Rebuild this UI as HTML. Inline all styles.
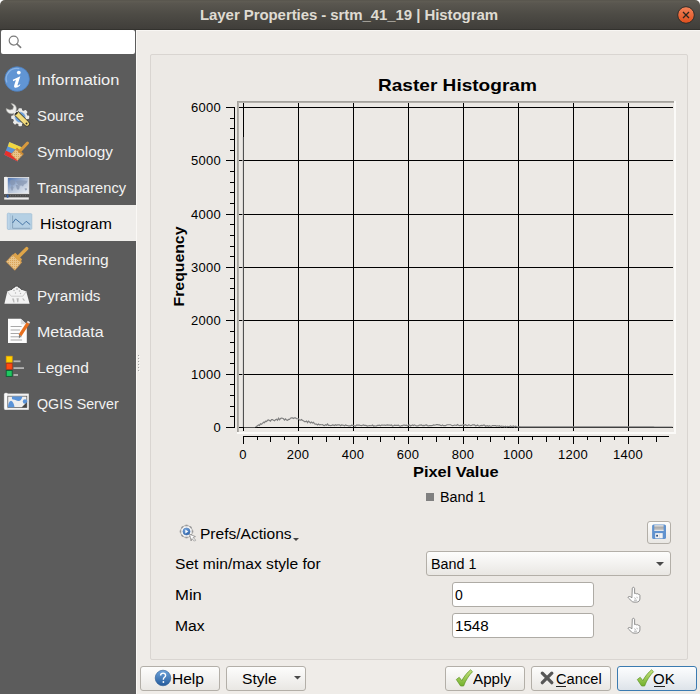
<!DOCTYPE html>
<html><head><meta charset="utf-8">
<style>
*{box-sizing:border-box}
html,body{margin:0;padding:0}
body{width:700px;height:694px;position:relative;overflow:hidden;background:#ffffff;font-family:"Liberation Sans",sans-serif;color:#000}
.a{position:absolute}
.t{position:absolute;line-height:1;white-space:nowrap;font-family:"Liberation Sans",sans-serif;transform-origin:0 50%}
#titlebar{left:0;top:0;width:700px;height:30px;background:linear-gradient(#55524b 0px,#5f5c53 1px,#5e5b53 2px,#5a5750 3px,#4d4b45 50%,#403e3a 100%);border-radius:5px 5px 0 0;border-bottom:1px solid #33322e}
#side{left:0;top:30px;width:136px;height:664px;background:#5c5c5c}
.si{color:#f2f2f2;font-size:14px}
#sel{left:0;top:205px;width:136px;height:36px;background:#efedea}
#search{left:1px;top:30px;width:134px;height:24px;background:#fff;border-radius:2px}
#panel{left:136px;top:30px;width:564px;height:664px;background:#efece8;border-left:1px solid #faf8f5;border-top:1px solid #f8f6f3}
#group{left:150px;top:54px;width:538px;height:606px;border:1px solid #d9d5d1;border-radius:2px;background:#ece9e5}
.yl{font-size:13px;text-align:right;width:60px;left:161px;letter-spacing:0.3px}
.xl{font-size:13px;text-align:center;width:60px;letter-spacing:0.3px}
.lbl{font-size:14px}
.btn{position:absolute;top:666px;height:25px;border:1px solid #b3afa8;border-radius:3px;background:linear-gradient(#fdfdfc,#f3f2f0 50%,#e9e7e3)}
.inp{position:absolute;left:452px;width:142px;height:25px;border:1px solid #aeaba5;border-radius:3px;background:#fff}
</style></head><body>

<div id="titlebar" class="a"></div>
<div class="t" style="left:200px;top:7px;font-size:15px;font-weight:700;color:#dfdbd2;letter-spacing:-0.075px">Layer Properties - srtm_41_19 | Histogram</div>
<svg class="a" style="left:676px;top:5px" width="20" height="20" viewBox="0 0 20 20">
  <defs><linearGradient id="cg" x1="0" y1="0" x2="0" y2="1"><stop offset="0" stop-color="#f3845b"/><stop offset="1" stop-color="#df4e1c"/></linearGradient></defs>
  <circle cx="10" cy="10" r="8.3" fill="url(#cg)" stroke="#2f2d29" stroke-width="1"/>
  <path d="M7 7L13 13M13 7L7 13" stroke="#2a2620" stroke-width="1.3"/>
</svg>

<div id="side" class="a"></div>
<div id="search" class="a"></div>
<svg class="a" style="left:7px;top:34px" width="18" height="18" viewBox="0 0 18 18">
  <circle cx="6.7" cy="6.6" r="4.5" fill="none" stroke="#7a7a7a" stroke-width="1.2"/>
  <path d="M10 10L13.6 13.4" stroke="#7a7a7a" stroke-width="1.6" stroke-linecap="round"/>
</svg>
<div id="sel" class="a"></div>

<!-- sidebar items -->
<div class="t si" style="left:37px;top:73px;transform:scaleX(1.176)">Information</div>
<div class="t si" style="left:37px;top:109px;transform:scaleX(1.058)">Source</div>
<div class="t si" style="left:37px;top:145px;transform:scaleX(1.096)">Symbology</div>
<div class="t si" style="left:37px;top:181px;transform:scaleX(1.047)">Transparency</div>
<div class="t si" style="left:40px;top:217px;transform:scaleX(1.129);color:#000">Histogram</div>
<div class="t si" style="left:37px;top:253px;transform:scaleX(1.111)">Rendering</div>
<div class="t si" style="left:37px;top:289px;transform:scaleX(1.088)">Pyramids</div>
<div class="t si" style="left:37px;top:325px;transform:scaleX(1.14)">Metadata</div>
<div class="t si" style="left:37px;top:361px;transform:scaleX(1.111)">Legend</div>
<div class="t si" style="left:37px;top:397px;transform:scaleX(1.019)">QGIS Server</div>

<svg class="a" style="left:0;top:60px" width="36" height="360" viewBox="0 60 36 360">
<defs>
 <linearGradient id="ib" x1="0" y1="0" x2="0.3" y2="1"><stop offset="0" stop-color="#7aaae0"/><stop offset="1" stop-color="#3f73b6"/></linearGradient>
 <linearGradient id="tm" x1="0" y1="0" x2="1" y2="1"><stop offset="0" stop-color="#3d67ab"/><stop offset="0.55" stop-color="#b6c4d9"/><stop offset="1" stop-color="#eef1f5"/></linearGradient>
 <pattern id="grid" width="2" height="2" patternUnits="userSpaceOnUse"><rect width="2" height="2" fill="#e9c489"/><rect width="1" height="1" fill="#d9a55a"/></pattern>
</defs>
<!-- Information -->
<circle cx="17.1" cy="79" r="12.3" fill="#6195d4" stroke="#4c7fc0" stroke-width="0.7"/>
<path d="M6.8 82.5a10.6 10.6 0 0 1 12.5-13.8" stroke="#8ab3e4" stroke-width="1.3" fill="none"/>
<circle cx="18.8" cy="72.6" r="1.9" fill="#fff"/>
<path d="M12.8 79.7L20.3 76.3 17.6 84.8c-0.3 0.9 0.3 1 1 0.4l1.8-1.3-0.6 1.8c-1.8 1.8-4.2 2.4-5.2 1.7-0.7-0.5-0.6-1.4-0.3-2.4L15.9 80 13.1 81.2z" fill="#fff"/>
<!-- Source: wrench + gear -->
<g>
 <g transform="translate(20.2 117.2)">
  <g fill="#ebebe9">
   <circle r="7.3"/>
   <rect x="-1.8" y="-9" width="3.6" height="18" rx="1"/>
   <rect x="-1.8" y="-9" width="3.6" height="18" rx="1" transform="rotate(45)"/>
   <rect x="-1.8" y="-9" width="3.6" height="18" rx="1" transform="rotate(90)"/>
   <rect x="-1.8" y="-9" width="3.6" height="18" rx="1" transform="rotate(135)"/>
  </g>
  <circle r="5.4" fill="#6b9fd9" stroke="#d8d8d6" stroke-width="0.5"/>
 </g>
 <path d="M6.2 108.6a5.2 5.2 0 0 0 7.6 4.6l1.8 1.8 2-2-1.8-1.8a5.2 5.2 0 0 0-4.6-7.6l2.4 2.8-0.8 2.8-2.8 0.8z" fill="#eeeeec" stroke="#a4a4a0" stroke-width="0.6"/>
 <path d="M14.6 115.2l3.6-3.6 10.6 10.4a2.5 2.5 0 0 1-3.6 3.6z" fill="#f2dc7c" stroke="#2e2d26" stroke-width="0.9" stroke-linejoin="round"/>
 <path d="M15.4 114.4l2-2" stroke="#2e2d26" stroke-width="1.6"/>
 <circle cx="26.5" cy="123.6" r="1" fill="#2e2d26"/>
</g>
<!-- Symbology -->
<g>
 <path d="M9.3 142L21.8 147.2 17.6 161.5 4.2 154.7z" fill="#5b94d6"/>
 <path d="M9.3 142L21.8 147.2 20.5 151.2 7.8 146.5z" fill="#f0d640"/>
 <path d="M5.8 150.5L18.7 156.8 17.6 161.5 4.2 154.7z" fill="#e8302a"/>
 <path d="M11 154.5l5.8-6.3 6.4 6-5.8 6.3z" fill="url(#grid)" stroke="#c8883a" stroke-width="0.6"/>
 <path d="M19.5 151.5l8-8.5" stroke="#d99a3e" stroke-width="3" stroke-linecap="round"/>
 <path d="M16.5 148.6l6.5 6" stroke="#c98a35" stroke-width="2"/>
</g>
<!-- Transparency -->
<g>
 <rect x="4.5" y="177.5" width="24.3" height="16.2" fill="url(#tm)" stroke="#ececec" stroke-width="0.8"/>
 <rect x="4.2" y="176.8" width="3.6" height="17" rx="1.5" fill="#f2f2f2"/>
 <g fill="#8797b2" opacity="0.75">
  <path d="M10 180.5c2-0.8 4-0.6 5.5 0.2l-0.5 3.2-2.2 1.6-1.2 0.2-1.5-2.5z"/>
  <path d="M11.5 186c1 0 2 0.6 2 1.5l-1 3.2-1-0.2-0.8-3z"/>
  <path d="M15.5 180.8c3-0.8 8-0.8 12 0l-1 2.5-2.5 1.2-1 2-1.5-1-2.5 0.3-1.5-1.5z"/>
  <path d="M15.8 185c1.5-0.3 3 0 4 0.6l-0.6 3.4-1.3 1-1.2-1.5z"/>
  <path d="M24.5 188.5l2-0.5 0.6 1.8-1.8 0.6z"/>
 </g>
 <rect x="4" y="194.6" width="25" height="2.2" fill="#4a4a4a"/>
 <path d="M5 195.7h23" stroke="#7a7a7a" stroke-width="0.8" stroke-dasharray="1 1.5"/>
 <rect x="4.2" y="197.4" width="24.6" height="2.2" fill="#ececec"/>
 <rect x="6.7" y="194.5" width="1.8" height="3.3" rx="0.5" fill="#2f5da6"/>
</g>
<!-- Rendering -->
<g>
 <path d="M6.2 261.7L12.7 254.7 21.8 262.2 14.8 270.3z" fill="url(#grid)" stroke="#d09445" stroke-width="0.7"/>
 <path d="M12.3 255.3l3-2.5 6.7 6.5-1.5 3z" fill="#dca24c"/>
 <path d="M17.5 257.8l9.2-9.2" stroke="#dfa548" stroke-width="3.4" stroke-linecap="round"/>
</g>
<!-- Pyramids -->
<g>
 <path d="M4.4 303.8L7.3 291.5 11.5 289.8 16.6 286 21.7 289.8 26.3 291.5 29.6 303.8z" fill="#f3f3f3"/>
 <path d="M11 290c1.8-2 3.8-3.6 5.6-3.9 1.8 0.3 3.8 1.9 5.6 3.9" stroke="#3e3e3e" stroke-width="0.9" stroke-dasharray="1.2 0.9" fill="none"/>
 <path d="M7.3 291.5L11.2 296.2M26.3 291.5L22.8 296.2M11.2 296.2h11.6" stroke="#c2c2c2" stroke-width="0.8" fill="none"/>
 <g fill="#b8b8b8">
  <circle cx="14" cy="290.5" r="0.8"/><circle cx="17" cy="289" r="0.9"/><circle cx="19.5" cy="291" r="0.8"/><circle cx="15.5" cy="293" r="0.7"/><circle cx="20.5" cy="293.5" r="0.7"/>
  <path d="M12 298.5l1.5 4h1l-0.5-4z"/><path d="M16.5 298.3l0.8 4h1l0.5-4z"/><path d="M22 298.5l2 2.5 0.8-0.5-1-2z"/>
 </g>
</g>
<!-- Metadata -->
<g>
 <path d="M8 318.7h12.8l6 5.6V343H8z" fill="#fdfdfd"/>
 <path d="M20.8 318.7v5.6h6z" fill="#dcdcdc"/>
 <path d="M10.6 326.5h11M10.6 330h9.5M10.6 333.5h8.5M10.6 336.8h11M10.6 340h11.5" stroke="#a8a8a8" stroke-width="1"/>
 <path d="M26.7 322.3l2.8 1.7-8.1 12.3-2.8-1.7z" fill="#e8701f"/>
 <path d="M19 334.6l2.3 1.5-2.4 2.4z" fill="#777"/>
 <path d="M26.8 322.3l1 -1.6 2.4 1.5-1 1.6z" fill="#efe3dc"/>
</g>
<!-- Legend -->
<g>
 <rect x="6.2" y="356.2" width="6" height="6" fill="#ffd200" stroke="#e8a200" stroke-width="0.7"/>
 <rect x="6.2" y="363.3" width="6" height="6" fill="#ff4a10" stroke="#b83010" stroke-width="0.7"/>
 <rect x="6.2" y="370.4" width="6" height="6" fill="#1ec860" stroke="#0e5a30" stroke-width="0.9"/>
 <rect x="13.5" y="360.4" width="7" height="1.8" fill="#b4b4b4"/>
 <rect x="13.5" y="367.2" width="10.5" height="1.8" fill="#b4b4b4"/>
 <rect x="13.5" y="374.1" width="4.5" height="1.8" fill="#b4b4b4"/>
</g>
<!-- QGIS Server -->
<g>
 <rect x="4.6" y="393.6" width="24.2" height="16.2" fill="#f3f3f3"/>
 <rect x="4.2" y="393" width="3.6" height="16.6" rx="1.5" fill="#fafafa" stroke="#cfcfcf" stroke-width="0.4"/>
 <rect x="7.8" y="396.2" width="19" height="11.3" fill="#efefef" stroke="#555" stroke-width="0.7"/>
 <path d="M12 396.5h10.5c-1 3-2 4.5-4 4.5s-3-1.5-5.5-1.5c-1.2 0-1.2-1.5-1-3z" fill="#5a93d8"/>
 <path d="M8 407.3c0-3 1-6 3-6.5 2 0.5 3 3 3.5 6.5z" fill="#5a93d8"/>
 <circle cx="25" cy="401.5" r="2.2" fill="#5a93d8"/>
 <path d="M21.5 407.5l5.3-5.3v5.3z" fill="#444"/>
</g>
</svg>
<!-- Histogram icon (selected row) -->
<svg class="a" style="left:6px;top:212px" width="28" height="20" viewBox="6 212 28 20">
 <rect x="7.5" y="213.7" width="24.3" height="15.6" rx="0.8" fill="#b5d0e4" stroke="#a3c0d6" stroke-width="0.8"/>
 <rect x="7.2" y="213" width="3" height="16.5" rx="1.4" fill="#bcd5e8" stroke="#a3c0d6" stroke-width="0.6"/>
 <path d="M12.6 215.5v12.8h17.5" stroke="#8aa6bd" stroke-width="1" fill="none"/>
 <path d="M12.6 223l3-4 4 3.3 3 2.6 3.6-3.6 4 3.3" stroke="#2c5f95" stroke-width="0.8" fill="none"/>
</svg>


<div id="panel" class="a"></div>
<svg class="a" style="left:137px;top:354px" width="4" height="20" shape-rendering="crispEdges"><rect x="1" y="1" width="1" height="1" fill="#a3a3a3"/><rect x="2" y="2" width="1" height="1" fill="#fbfaf8"/><rect x="1" y="4" width="1" height="1" fill="#a3a3a3"/><rect x="2" y="5" width="1" height="1" fill="#fbfaf8"/><rect x="1" y="7" width="1" height="1" fill="#a3a3a3"/><rect x="2" y="8" width="1" height="1" fill="#fbfaf8"/><rect x="1" y="10" width="1" height="1" fill="#a3a3a3"/><rect x="2" y="11" width="1" height="1" fill="#fbfaf8"/><rect x="1" y="13" width="1" height="1" fill="#a3a3a3"/><rect x="2" y="14" width="1" height="1" fill="#fbfaf8"/><rect x="1" y="16" width="1" height="1" fill="#a3a3a3"/><rect x="2" y="17" width="1" height="1" fill="#fbfaf8"/></svg>
<div id="group" class="a"></div>

<svg class="a" style="left:0;top:0" width="700" height="694" viewBox="0 0 700 694" shape-rendering="crispEdges">
<rect x="237" y="101" width="439" height="333" fill="#fbfaf8"/>
<rect x="237" y="101" width="437" height="331" fill="#a4a29d"/>
<rect x="238" y="102" width="436" height="330" fill="#b3b0ab"/>
<rect x="239" y="103" width="435" height="329" fill="#ece9e5"/>
<line x1="239" y1="107.5" x2="673" y2="107.5" stroke="#000" stroke-width="1"/>
<line x1="239" y1="160.5" x2="673" y2="160.5" stroke="#000" stroke-width="1"/>
<line x1="239" y1="214.5" x2="673" y2="214.5" stroke="#000" stroke-width="1"/>
<line x1="239" y1="267.5" x2="673" y2="267.5" stroke="#000" stroke-width="1"/>
<line x1="239" y1="320.5" x2="673" y2="320.5" stroke="#000" stroke-width="1"/>
<line x1="239" y1="374.5" x2="673" y2="374.5" stroke="#000" stroke-width="1"/>
<line x1="239" y1="427.5" x2="673" y2="427.5" stroke="#000" stroke-width="1"/>
<line x1="243.5" y1="103" x2="243.5" y2="431" stroke="#000" stroke-width="1"/>
<line x1="298.5" y1="103" x2="298.5" y2="431" stroke="#000" stroke-width="1"/>
<line x1="353.5" y1="103" x2="353.5" y2="431" stroke="#000" stroke-width="1"/>
<line x1="408.5" y1="103" x2="408.5" y2="431" stroke="#000" stroke-width="1"/>
<line x1="463.5" y1="103" x2="463.5" y2="431" stroke="#000" stroke-width="1"/>
<line x1="518.5" y1="103" x2="518.5" y2="431" stroke="#000" stroke-width="1"/>
<line x1="573.5" y1="103" x2="573.5" y2="431" stroke="#000" stroke-width="1"/>
<line x1="628.5" y1="103" x2="628.5" y2="431" stroke="#000" stroke-width="1"/>
<line x1="234.5" y1="107" x2="234.5" y2="428" stroke="#000" stroke-width="1"/>
<line x1="226" y1="107.5" x2="235" y2="107.5" stroke="#000" stroke-width="1"/>
<line x1="230" y1="118.5" x2="235" y2="118.5" stroke="#000" stroke-width="1"/>
<line x1="230" y1="128.5" x2="235" y2="128.5" stroke="#000" stroke-width="1"/>
<line x1="230" y1="139.5" x2="235" y2="139.5" stroke="#000" stroke-width="1"/>
<line x1="230" y1="150.5" x2="235" y2="150.5" stroke="#000" stroke-width="1"/>
<line x1="226" y1="160.5" x2="235" y2="160.5" stroke="#000" stroke-width="1"/>
<line x1="230" y1="171.5" x2="235" y2="171.5" stroke="#000" stroke-width="1"/>
<line x1="230" y1="182.5" x2="235" y2="182.5" stroke="#000" stroke-width="1"/>
<line x1="230" y1="192.5" x2="235" y2="192.5" stroke="#000" stroke-width="1"/>
<line x1="230" y1="203.5" x2="235" y2="203.5" stroke="#000" stroke-width="1"/>
<line x1="226" y1="214.5" x2="235" y2="214.5" stroke="#000" stroke-width="1"/>
<line x1="230" y1="224.5" x2="235" y2="224.5" stroke="#000" stroke-width="1"/>
<line x1="230" y1="235.5" x2="235" y2="235.5" stroke="#000" stroke-width="1"/>
<line x1="230" y1="246.5" x2="235" y2="246.5" stroke="#000" stroke-width="1"/>
<line x1="230" y1="256.5" x2="235" y2="256.5" stroke="#000" stroke-width="1"/>
<line x1="226" y1="267.5" x2="235" y2="267.5" stroke="#000" stroke-width="1"/>
<line x1="230" y1="278.5" x2="235" y2="278.5" stroke="#000" stroke-width="1"/>
<line x1="230" y1="288.5" x2="235" y2="288.5" stroke="#000" stroke-width="1"/>
<line x1="230" y1="299.5" x2="235" y2="299.5" stroke="#000" stroke-width="1"/>
<line x1="230" y1="310.5" x2="235" y2="310.5" stroke="#000" stroke-width="1"/>
<line x1="226" y1="320.5" x2="235" y2="320.5" stroke="#000" stroke-width="1"/>
<line x1="230" y1="331.5" x2="235" y2="331.5" stroke="#000" stroke-width="1"/>
<line x1="230" y1="342.5" x2="235" y2="342.5" stroke="#000" stroke-width="1"/>
<line x1="230" y1="352.5" x2="235" y2="352.5" stroke="#000" stroke-width="1"/>
<line x1="230" y1="363.5" x2="235" y2="363.5" stroke="#000" stroke-width="1"/>
<line x1="226" y1="374.5" x2="235" y2="374.5" stroke="#000" stroke-width="1"/>
<line x1="230" y1="384.5" x2="235" y2="384.5" stroke="#000" stroke-width="1"/>
<line x1="230" y1="395.5" x2="235" y2="395.5" stroke="#000" stroke-width="1"/>
<line x1="230" y1="406.5" x2="235" y2="406.5" stroke="#000" stroke-width="1"/>
<line x1="230" y1="416.5" x2="235" y2="416.5" stroke="#000" stroke-width="1"/>
<line x1="226" y1="427.5" x2="235" y2="427.5" stroke="#000" stroke-width="1"/>
<line x1="243" y1="436.5" x2="669" y2="436.5" stroke="#000" stroke-width="1"/>
<line x1="243.5" y1="436" x2="243.5" y2="444" stroke="#000" stroke-width="1"/>
<line x1="257.5" y1="436" x2="257.5" y2="440" stroke="#000" stroke-width="1"/>
<line x1="270.5" y1="436" x2="270.5" y2="442" stroke="#000" stroke-width="1"/>
<line x1="284.5" y1="436" x2="284.5" y2="440" stroke="#000" stroke-width="1"/>
<line x1="298.5" y1="436" x2="298.5" y2="444" stroke="#000" stroke-width="1"/>
<line x1="312.5" y1="436" x2="312.5" y2="440" stroke="#000" stroke-width="1"/>
<line x1="326.5" y1="436" x2="326.5" y2="442" stroke="#000" stroke-width="1"/>
<line x1="339.5" y1="436" x2="339.5" y2="440" stroke="#000" stroke-width="1"/>
<line x1="353.5" y1="436" x2="353.5" y2="444" stroke="#000" stroke-width="1"/>
<line x1="367.5" y1="436" x2="367.5" y2="440" stroke="#000" stroke-width="1"/>
<line x1="380.5" y1="436" x2="380.5" y2="442" stroke="#000" stroke-width="1"/>
<line x1="394.5" y1="436" x2="394.5" y2="440" stroke="#000" stroke-width="1"/>
<line x1="408.5" y1="436" x2="408.5" y2="444" stroke="#000" stroke-width="1"/>
<line x1="422.5" y1="436" x2="422.5" y2="440" stroke="#000" stroke-width="1"/>
<line x1="436.5" y1="436" x2="436.5" y2="442" stroke="#000" stroke-width="1"/>
<line x1="449.5" y1="436" x2="449.5" y2="440" stroke="#000" stroke-width="1"/>
<line x1="463.5" y1="436" x2="463.5" y2="444" stroke="#000" stroke-width="1"/>
<line x1="477.5" y1="436" x2="477.5" y2="440" stroke="#000" stroke-width="1"/>
<line x1="490.5" y1="436" x2="490.5" y2="442" stroke="#000" stroke-width="1"/>
<line x1="504.5" y1="436" x2="504.5" y2="440" stroke="#000" stroke-width="1"/>
<line x1="518.5" y1="436" x2="518.5" y2="444" stroke="#000" stroke-width="1"/>
<line x1="532.5" y1="436" x2="532.5" y2="440" stroke="#000" stroke-width="1"/>
<line x1="546.5" y1="436" x2="546.5" y2="442" stroke="#000" stroke-width="1"/>
<line x1="559.5" y1="436" x2="559.5" y2="440" stroke="#000" stroke-width="1"/>
<line x1="573.5" y1="436" x2="573.5" y2="444" stroke="#000" stroke-width="1"/>
<line x1="587.5" y1="436" x2="587.5" y2="440" stroke="#000" stroke-width="1"/>
<line x1="600.5" y1="436" x2="600.5" y2="442" stroke="#000" stroke-width="1"/>
<line x1="614.5" y1="436" x2="614.5" y2="440" stroke="#000" stroke-width="1"/>
<line x1="628.5" y1="436" x2="628.5" y2="444" stroke="#000" stroke-width="1"/>
<line x1="642.5" y1="436" x2="642.5" y2="440" stroke="#000" stroke-width="1"/>
<line x1="656.5" y1="436" x2="656.5" y2="442" stroke="#000" stroke-width="1"/>
<g shape-rendering="geometricPrecision">
<path d="M255.5,427.00 L256.5,426.52 L257.5,425.69 L258.5,424.86 L259.5,425.38 L260.5,423.74 L261.5,424.18 L262.5,423.36 L263.5,422.25 L264.5,422.66 L265.5,421.24 L266.5,421.54 L267.5,420.33 L268.5,419.88 L269.5,420.40 L270.5,421.05 L271.5,419.50 L272.5,419.55 L273.5,420.20 L274.5,420.70 L275.5,419.80 L276.5,419.29 L277.5,420.31 L278.5,418.31 L279.5,419.80 L280.5,418.52 L281.5,418.09 L282.5,418.24 L283.5,418.82 L284.5,420.03 L285.5,418.96 L286.5,419.96 L287.5,420.28 L288.5,419.44 L289.5,419.50 L290.5,418.23 L291.5,417.92 L292.5,417.91 L293.5,418.56 L294.5,417.76 L295.5,417.84 L296.5,418.69 L297.5,418.74 L298.5,418.74 L299.5,420.04 L300.5,420.16 L301.5,419.57 L302.5,420.54 L303.5,420.75 L304.5,421.70 L305.5,421.65 L306.5,421.02 L307.5,422.65 L308.5,421.17 L309.5,422.02 L310.5,422.94 L311.5,421.98 L312.5,422.90 L313.5,422.25 L314.5,423.75 L315.5,424.19 L316.5,424.05 L317.5,424.90 L318.5,424.03 L319.5,424.85 L320.5,424.70 L321.5,424.73 L322.5,424.54 L323.5,425.36 L324.5,425.63 L325.5,424.74 L326.5,425.18 L327.5,424.03 L328.5,425.37 L329.5,425.31 L330.5,425.67 L331.5,425.52 L332.5,424.93 L333.5,425.11 L334.5,425.50 L335.5,424.74 L336.5,425.28 L337.5,424.94 L338.5,424.89 L339.5,424.83 L340.5,425.70 L341.5,424.94 L342.5,425.10 L343.5,425.28 L344.5,425.87 L345.5,424.93 L346.5,425.39 L347.5,425.52 L348.5,425.94 L349.5,425.87 L350.5,425.94 L351.5,425.24 L352.5,425.40 L353.5,425.34 L354.5,425.97 L355.5,426.06 L356.5,425.09 L357.5,425.13 L358.5,425.19 L359.5,425.20 L360.5,425.50 L361.5,425.63 L362.5,425.24 L363.5,424.93 L364.5,425.43 L365.5,425.37 L366.5,425.61 L367.5,426.08 L368.5,425.76 L369.5,425.56 L370.5,425.68 L371.5,425.75 L372.5,425.01 L373.5,426.03 L374.5,425.88 L375.5,426.00 L376.5,425.91 L377.5,425.42 L378.5,425.43 L379.5,425.08 L380.5,425.72 L381.5,425.04 L382.5,425.04 L383.5,425.22 L384.5,425.16 L385.5,425.38 L386.5,425.04 L387.5,424.97 L388.5,425.16 L389.5,425.10 L390.5,425.42 L391.5,425.01 L392.5,426.03 L393.5,425.72 L394.5,425.17 L395.5,425.29 L396.5,425.41 L397.5,425.43 L398.5,425.14 L399.5,426.02 L400.5,426.19 L401.5,425.55 L402.5,425.55 L403.5,425.06 L404.5,425.07 L405.5,425.34 L406.5,425.24 L407.5,425.90 L408.5,425.09 L409.5,424.91 L410.5,426.01 L411.5,425.49 L412.5,425.02 L413.5,425.48 L414.5,424.85 L415.5,425.43 L416.5,425.96 L417.5,425.81 L418.5,425.60 L419.5,425.06 L420.5,425.17 L421.5,424.92 L422.5,425.63 L423.5,425.33 L424.5,425.61 L425.5,425.06 L426.5,424.92 L427.5,425.61 L428.5,425.81 L429.5,425.64 L430.5,425.57 L431.5,425.58 L432.5,425.48 L433.5,424.85 L434.5,425.20 L435.5,425.00 L436.5,424.60 L437.5,424.59 L438.5,424.89 L439.5,424.86 L440.5,425.37 L441.5,425.68 L442.5,425.07 L443.5,425.65 L444.5,425.71 L445.5,425.66 L446.5,424.95 L447.5,424.77 L448.5,424.77 L449.5,424.73 L450.5,424.73 L451.5,425.23 L452.5,425.55 L453.5,425.48 L454.5,425.04 L455.5,425.24 L456.5,425.41 L457.5,424.55 L458.5,425.23 L459.5,425.53 L460.5,425.37 L461.5,425.32 L462.5,424.99 L463.5,424.63 L464.5,425.35 L465.5,424.80 L466.5,425.39 L467.5,425.63 L468.5,424.97 L469.5,425.01 L470.5,425.70 L471.5,425.46 L472.5,424.83 L473.5,424.81 L474.5,424.87 L475.5,425.81 L476.5,425.72 L477.5,424.96 L478.5,425.81 L479.5,426.02 L480.5,425.67 L481.5,425.33 L482.5,425.60 L483.5,425.13 L484.5,425.03 L485.5,426.21 L486.5,425.85 L487.5,425.74 L488.5,426.26 L489.5,425.69 L490.5,426.25 L491.5,426.23 L492.5,425.53 L493.5,425.62 L494.5,425.71 L495.5,425.69 L496.5,426.14 L497.5,425.79 L498.5,426.02 L499.5,425.72 L500.5,426.69 L501.5,426.06 L502.5,426.23 L503.5,426.42 L504.5,426.85 L505.5,426.30 L506.5,426.93 L507.5,426.46 L508.5,426.52 L509.5,426.53 L510.5,425.96 L511.5,426.49 L512.5,426.21 L513.5,426.02 L514.5,427.00 L515.5,426.27 L516.5,426.66 L517.5,426.99 L518.5,426.81 L519.5,426.56 L520.5,426.80 L521.5,426.80 L522.5,426.80 L523.5,426.80 L524.5,426.81 L525.5,426.81 L526.5,426.81 L527.5,426.81 L528.5,426.81 L529.5,426.81 L530.5,426.81 L531.5,426.81 L532.5,426.82 L533.5,426.82 L534.5,426.82 L535.5,426.82 L536.5,426.82 L537.5,426.82 L538.5,426.82 L539.5,426.82 L540.5,426.83 L541.5,426.83 L542.5,426.83 L543.5,426.83 L544.5,426.83 L545.5,426.83 L546.5,426.83 L547.5,426.84 L548.5,426.84 L549.5,426.84 L550.5,426.84 L551.5,426.84 L552.5,426.84 L553.5,426.84 L554.5,426.84 L555.5,426.85 L556.5,426.85 L557.5,426.85 L558.5,426.85 L559.5,426.85 L560.5,426.85 L561.5,426.85 L562.5,426.85 L563.5,426.86 L564.5,426.86 L565.5,426.86 L566.5,426.86 L567.5,426.86 L568.5,426.86 L569.5,426.86 L570.5,426.87 L571.5,426.87 L572.5,426.87 L573.5,426.87 L574.5,426.87 L575.5,426.87 L576.5,426.87 L577.5,426.87 L578.5,426.88 L579.5,426.88 L580.5,426.88 L581.5,426.88 L582.5,426.88 L583.5,426.88 L584.5,426.88 L585.5,426.88 L586.5,426.89 L587.5,426.89 L588.5,426.89 L589.5,426.89 L590.5,426.89 L591.5,426.89 L592.5,426.89 L593.5,426.90 L594.5,426.90 L595.5,426.90 L596.5,426.90 L597.5,426.90 L598.5,426.90 L599.5,426.90 L600.5,426.90 L601.5,426.91 L602.5,426.91 L603.5,426.91 L604.5,426.91 L605.5,426.91 L606.5,426.91 L607.5,426.91 L608.5,426.92 L609.5,426.92 L610.5,426.92 L611.5,426.92 L612.5,426.92 L613.5,426.92 L614.5,426.92 L615.5,426.92 L616.5,426.93 L617.5,426.93 L618.5,426.93 L619.5,426.93 L620.5,426.93 L621.5,426.93 L622.5,426.93 L623.5,426.93 L624.5,426.94 L625.5,426.94 L626.5,426.94 L627.5,426.94 L628.5,426.94 L629.5,426.94 L630.5,426.94 L631.5,426.95 L632.5,426.95 L633.5,426.95 L634.5,426.95 L635.5,426.95 L636.5,426.95 L637.5,426.95 L638.5,426.95 L639.5,426.96 L640.5,426.96 L641.5,426.96 L642.5,426.96 L643.5,426.96 L644.5,426.96 L645.5,426.96 L646.5,426.96 L647.5,426.97 L648.5,426.97 L649.5,426.97 L650.5,426.97 L651.5,426.97 L652.5,426.97 L653.5,426.97 L654.5,426.98 L655.5,426.98 L656.5,426.98 L657.5,426.98 L658.5,426.98 L659.5,426.98 L660.5,426.98 L661.5,426.98 L662.5,426.99 L663.5,426.99 L664.5,426.99 L665.5,426.99 L666.5,426.99 L667.5,426.99 L668.5,426.99 L669.5,426.99 L670.5,427.00 L671.5,427.00 L672.5,427.00 L672.5,427.00" fill="none" stroke="#808080" stroke-width="1.2"/>
<rect x="243" y="137" width="1" height="290" fill="#505050"/>
<rect x="242" y="137" width="1" height="290" fill="#cfcdc9" opacity="0.6"/>
<rect x="244" y="427" width="11" height="1" fill="#505050"/>
</g>

</svg>

<div class="t" style="left:378px;top:77px;font-size:17px;font-weight:700;transform:scaleX(1.121)">Raster Histogram</div>

<div class="t yl" style="top:101px">6000</div>
<div class="t yl" style="top:154px">5000</div>
<div class="t yl" style="top:208px">4000</div>
<div class="t yl" style="top:261px">3000</div>
<div class="t yl" style="top:314px">2000</div>
<div class="t yl" style="top:368px">1000</div>
<div class="t yl" style="top:421px">0</div>

<div class="t xl" style="left:213px;top:448px">0</div>
<div class="t xl" style="left:268px;top:448px">200</div>
<div class="t xl" style="left:323px;top:448px">400</div>
<div class="t xl" style="left:378px;top:448px">600</div>
<div class="t xl" style="left:433px;top:448px">800</div>
<div class="t xl" style="left:488px;top:448px">1000</div>
<div class="t xl" style="left:543px;top:448px">1200</div>
<div class="t xl" style="left:598px;top:448px">1400</div>

<div class="t" style="left:413px;top:464px;font-size:15px;font-weight:700;transform:scaleX(1.091)">Pixel Value</div>
<div class="t" style="left:138px;top:259px;font-size:15px;font-weight:700;transform:rotate(-90deg) scaleX(1.053);transform-origin:center;width:80px;text-align:center;height:15px">Frequency</div>

<div class="a" style="left:426px;top:493px;width:8px;height:8px;background:#808080"></div>
<div class="t lbl" style="left:440px;top:490px;transform:scaleX(1.023)">Band 1</div>

<div class="t lbl" style="left:200px;top:527px;transform:scaleX(1.11)">Prefs/Actions</div>
<svg class="a" style="left:292px;top:537px" width="8" height="5"><path d="M1 1h6l-3 3z" fill="#444"/></svg>
<div class="t lbl" style="left:175px;top:557px;transform:scaleX(1.115)">Set min/max style for</div>
<div class="t lbl" style="left:175px;top:588px;transform:scaleX(1.19)">Min</div>
<div class="t lbl" style="left:175px;top:619px;transform:scaleX(1.12)">Max</div>

<!-- save button -->
<div class="btn" style="left:647px;top:521px;width:24px;height:23px"></div>
<!-- combo -->
<div class="btn" style="left:426px;top:551px;width:245px;height:25px"></div>
<div class="t lbl" style="left:431px;top:557px;transform:scaleX(1.023)">Band 1</div>
<svg class="a" style="left:655px;top:561px" width="10" height="6"><path d="M1 1h8l-4 4z" fill="#4a4a4a"/></svg>

<div class="inp" style="top:582px"></div>
<div class="t lbl" style="left:455px;top:588px">0</div>
<div class="inp" style="top:613px"></div>
<div class="t lbl" style="left:455px;top:619px;transform:scaleX(1.08)">1548</div>

<!-- bottom buttons -->
<div class="btn" style="left:140px;width:80px"></div>
<div class="t lbl" style="left:172px;top:672px;transform:scaleX(1.11)">Help</div>
<div class="btn" style="left:226px;width:80px"></div>
<div class="t lbl" style="left:242px;top:672px;transform:scaleX(1.117)">Style</div>
<svg class="a" style="left:293px;top:675px" width="10" height="6"><path d="M1 1h7l-3.5 3.5z" fill="#4a4a4a"/></svg>
<div class="btn" style="left:445px;width:80px"></div>
<div class="t lbl" style="left:473px;top:672px;transform:scaleX(1.086)">Apply</div>
<div class="btn" style="left:531px;width:80px"></div>
<div class="t lbl" style="left:556px;top:672px;transform:scaleX(1.048)">Cancel</div>
<div class="a" style="left:556px;top:686px;width:10px;height:1px;background:#222"></div>
<div class="btn" style="left:617px;width:80px;border-color:#3b7bb0;background:linear-gradient(#fcfdfe,#eef1f4 50%,#dde3e9)"></div>
<div class="t lbl" style="left:653px;top:672px;transform:scaleX(1.068)">OK</div>
<div class="a" style="left:654px;top:686px;width:11px;height:1px;background:#222"></div>

<!-- Prefs/Actions icon -->
<svg class="a" style="left:178px;top:522px" width="20" height="21" viewBox="178 522 20 21">
 <defs><linearGradient id="pb" x1="0" y1="0" x2="0.5" y2="1"><stop offset="0" stop-color="#7fb0e6"/><stop offset="1" stop-color="#3468ad"/></linearGradient></defs>
 <g transform="translate(186.5 531.5)">
  <g fill="#f6f6f6" stroke="#8c8c8c" stroke-width="0.7">
   <circle r="6"/>
  </g>
  <g fill="#9a9a9a">
   <rect x="-1" y="-6.8" width="2" height="1.6"/><rect x="-1" y="5.2" width="2" height="1.6"/>
   <rect x="-6.8" y="-1" width="1.6" height="2"/><rect x="5.2" y="-1" width="1.6" height="2"/>
   <rect x="-1" y="-6.8" width="2" height="1.6" transform="rotate(45)"/><rect x="-1" y="5.2" width="2" height="1.6" transform="rotate(45)"/>
   <rect x="-6.8" y="-1" width="1.6" height="2" transform="rotate(45)"/><rect x="5.2" y="-1" width="1.6" height="2" transform="rotate(45)"/>
  </g>
  <circle r="4.4" fill="#fafafa"/>
  <circle r="3.6" fill="url(#pb)" stroke="#3c6aa8" stroke-width="0.5"/>
  <path d="M-1.2 -1.9l3 1.9-3 1.9z" fill="#fff"/>
 </g>
 <path d="M189.6 534.2l5.8 2.4-2.3 0.9 2.5 2.6-1.1 1.1-2.5-2.6-0.9 2.3z" fill="#fff" stroke="#6a6a6a" stroke-width="0.6" stroke-linejoin="round"/>
</svg>
<!-- save icon -->
<svg class="a" style="left:651px;top:523px" width="17" height="17" viewBox="651 523 17 17">
 <defs><linearGradient id="fl" x1="0" y1="0" x2="0" y2="1"><stop offset="0" stop-color="#e4e4e4"/><stop offset="0.5" stop-color="#a9a9a9"/><stop offset="1" stop-color="#d0d0d0"/></linearGradient></defs>
 <rect x="652.1" y="524.5" width="13.9" height="14.5" rx="1.6" fill="#6193cf"/>
 <rect x="654.3" y="525.1" width="9.3" height="5.2" fill="url(#fl)"/>
 <rect x="654.3" y="530.1" width="9.3" height="0.9" fill="#eeeeee"/>
 <rect x="655.2" y="533.1" width="7.5" height="5.2" fill="#f3f3f3"/>
 <rect x="659.2" y="533.4" width="0.6" height="4.8" fill="#d8d8d8"/>
 <rect x="656.2" y="534.8" width="1.8" height="1.8" fill="#2b4f80"/>
</svg>
<!-- hand icons -->
<svg class="a" style="left:625px;top:585px" width="18" height="50" viewBox="625 585 18 50">
 <g id="hand">
 <path d="M632.3 588.2c0.2-0.9 1.3-1.2 1.9-0.6 0.3 0.3 0.4 0.7 0.4 1.1v4.9c0.6-0.4 1.4-0.3 1.9 0.2 0.6-0.3 1.4-0.1 1.8 0.5 0.8-0.2 1.6 0.4 1.6 1.2v3.4c0 1.9-1.5 3.2-3.3 3.2h-2.6c-1.1 0-2-0.5-2.6-1.3l-3-2.8c-0.5-0.5-0.2-1.4 0.5-1.5 0.9-0.2 2.1 0.5 3 1.3z" fill="#fdfdfd" stroke="#707070" stroke-width="0.75" stroke-linejoin="round"/>
 <path d="M634.6 597.5l1 1.6M636.8 596.8l0.6 1.4M634 600.2h3" stroke="#a0a0a0" stroke-width="0.8" fill="none"/>
 </g>
 <g transform="translate(0 31)">
 <path d="M632.3 588.2c0.2-0.9 1.3-1.2 1.9-0.6 0.3 0.3 0.4 0.7 0.4 1.1v4.9c0.6-0.4 1.4-0.3 1.9 0.2 0.6-0.3 1.4-0.1 1.8 0.5 0.8-0.2 1.6 0.4 1.6 1.2v3.4c0 1.9-1.5 3.2-3.3 3.2h-2.6c-1.1 0-2-0.5-2.6-1.3l-3-2.8c-0.5-0.5-0.2-1.4 0.5-1.5 0.9-0.2 2.1 0.5 3 1.3z" fill="#fdfdfd" stroke="#707070" stroke-width="0.75" stroke-linejoin="round"/>
 <path d="M634.6 597.5l1 1.6M636.8 596.8l0.6 1.4M634 600.2h3" stroke="#a0a0a0" stroke-width="0.8" fill="none"/>
 </g>
</svg>
<!-- Help icon -->
<svg class="a" style="left:154px;top:669px" width="18" height="18" viewBox="154 669 18 18">
 <defs><linearGradient id="hb" x1="0" y1="0" x2="0" y2="1"><stop offset="0" stop-color="#6ea4dc"/><stop offset="1" stop-color="#245a9a"/></linearGradient></defs>
 <circle cx="163" cy="678" r="7.8" fill="url(#hb)" stroke="#2a5a94" stroke-width="0.6"/>
 <path d="M160.6 675.6c0-1.5 1.1-2.5 2.5-2.5s2.5 0.9 2.5 2.3c0 1.8-2.2 2-2.2 3.7v0.6" stroke="#fff" stroke-width="1.4" fill="none"/>
 <circle cx="163.4" cy="682" r="0.9" fill="#fff"/>
</svg>
<!-- Apply check -->
<svg class="a" style="left:455px;top:668px" width="19" height="20" viewBox="455 668 19 20">
 <defs><linearGradient id="gc456" x1="0" y1="0" x2="0" y2="1"><stop offset="0" stop-color="#c6e27e"/><stop offset="1" stop-color="#72b02c"/></linearGradient></defs>
 <path transform="translate(0 0)" d="M456.3 679.5L459.2 677.3 461.8 680.6C464.2 676.2 467.3 672.4 470.6 669.8L472.5 671.7C469 675.2 465.6 680.4 463.6 686H460.6Z" fill="url(#gc456)" stroke="#5c9424" stroke-width="0.7" stroke-linejoin="round"/>
</svg>
<!-- Cancel X -->
<svg class="a" style="left:539px;top:670px" width="16" height="16" viewBox="539 670 16 16">
 <path d="M542.3 673.2L551.8 682.7M551.8 673.2L542.3 682.7" stroke="#575757" stroke-width="3.3" stroke-linecap="round"/>
</svg>
<!-- OK check -->
<svg class="a" style="left:636px;top:668px" width="19" height="20" viewBox="636 668 19 20">
 <defs><linearGradient id="gc637" x1="0" y1="0" x2="0" y2="1"><stop offset="0" stop-color="#c6e27e"/><stop offset="1" stop-color="#72b02c"/></linearGradient></defs>
 <path transform="translate(181 0)" d="M456.3 679.5L459.2 677.3 461.8 680.6C464.2 676.2 467.3 672.4 470.6 669.8L472.5 671.7C469 675.2 465.6 680.4 463.6 686H460.6Z" fill="url(#gc637)" stroke="#5c9424" stroke-width="0.7" stroke-linejoin="round"/>
</svg>


</body></html>
